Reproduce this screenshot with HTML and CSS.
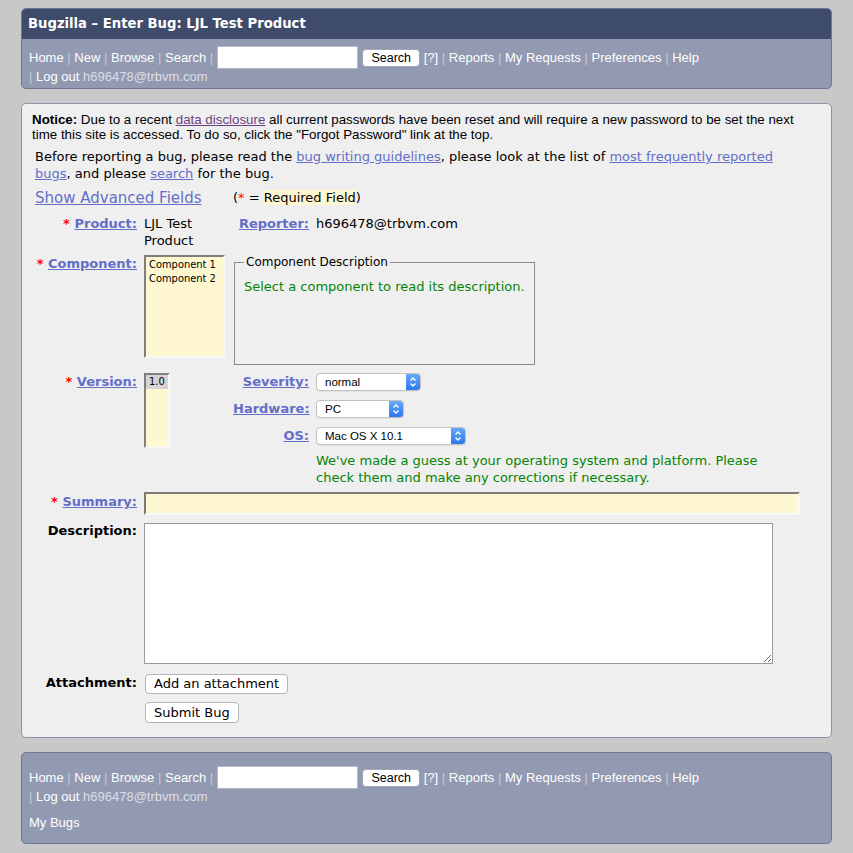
FILE: index.html
```html
<!DOCTYPE html>
<html>
<head>
<meta charset="utf-8">
<title>Bugzilla – Enter Bug: LJL Test Product</title>
<link rel="stylesheet" href="styles.css">
</head>
<body>
<div class="page">
  <div class="header">
    <div class="title">Bugzilla – Enter Bug: LJL Test Product</div>
    <div class="nav">
      <ul class="links">
        <li><a href="#">Home</a></li>
        <li><span class="sep">|</span> <a href="#">New</a></li>
        <li><span class="sep">|</span> <a href="#">Browse</a></li>
        <li><span class="sep">|</span> <a href="#">Search</a></li>
        <li><span class="sep">|</span> <input class="quick" type="text"> <button class="qbtn">Search</button> <a href="#">[?]</a></li>
        <li><span class="sep">|</span> <a href="#">Reports</a></li>
        <li><span class="sep">|</span> <a href="#">My Requests</a></li>
        <li><span class="sep">|</span> <a href="#">Preferences</a></li>
        <li><span class="sep">|</span> <a href="#">Help</a></li>
        <li><span class="sep">|</span> <a href="#">Log out</a> <span class="email">h696478@trbvm.com</span></li>
      </ul>
    </div>
  </div>

  <div class="main">
    <div class="notice"><b>Notice:</b> Due to a recent <a class="visited" href="#">data disclosure</a> all current passwords have been reset and will require a new password to be set the next time this site is accessed. To do so, click the "Forgot Password" link at the top.</div>
    <p class="guide">Before reporting a bug, please read the <a href="#">bug writing guidelines</a>, please look at the list of <a href="#">most frequently reported bugs</a>, and please <a href="#">search</a> for the bug.</p>

    <div class="form">
      <div class="adv r1 c12"><a href="#">Show Advanced Fields</a></div>
      <div class="reqnote r1 c34">(<span class="star">*</span> = <span class="hl">Required Field</span>)</div>

      <div class="lbl r2 c1"><span class="star">*</span> <a href="#">Product:</a></div>
      <div class="val2 r2 c2">LJL Test Product</div>
      <div class="lbl r2 c3"><a href="#">Reporter:</a></div>
      <div class="val r2 c4">h696478@trbvm.com</div>

      <div class="lbl up r3 c1"><span class="star">*</span> <a href="#">Component:</a></div>
      <div class="lb comp up r3 c2">
        <div class="opt">Component 1</div>
        <div class="opt">Component 2</div>
      </div>
      <fieldset class="fs up r3 c34">
        <legend>Component Description</legend>
        <div class="green">Select a component to read its description.</div>
      </fieldset>

      <div class="lbl tall r4 c1"><span class="star">*</span> <a href="#">Version:</a></div>
      <div class="lb ver c2">
        <div class="opt sel">1.0</div>
      </div>
      <div class="lbl tall r4 c3"><a href="#">Severity:</a></div>
      <div class="select w-sev r4 c4"><span class="st">normal</span><span class="sb"><svg width="14" height="16" viewBox="0 0 14 16"><path d="M4.5 6.5 L7 4 L9.5 6.5 M4.5 9.5 L7 12 L9.5 9.5" fill="none" stroke="#fff" stroke-width="1.4"/></svg></span></div>
      <div class="lbl tall r5 c3"><a href="#">Hardware:</a></div>
      <div class="select w-hw r5 c4"><span class="st">PC</span><span class="sb"><svg width="14" height="16" viewBox="0 0 14 16"><path d="M4.5 6.5 L7 4 L9.5 6.5 M4.5 9.5 L7 12 L9.5 9.5" fill="none" stroke="#fff" stroke-width="1.4"/></svg></span></div>
      <div class="lbl tall r6 c3"><a href="#">OS:</a></div>
      <div class="select w-os r6 c4"><span class="st">Mac OS X 10.1</span><span class="sb"><svg width="14" height="16" viewBox="0 0 14 16"><path d="M4.5 6.5 L7 4 L9.5 6.5 M4.5 9.5 L7 12 L9.5 9.5" fill="none" stroke="#fff" stroke-width="1.4"/></svg></span></div>
      <div class="note r7 c4">We've made a guess at your operating system and platform. Please check them and make any corrections if necessary.</div>

      <div class="lbl sumlbl r8 c1"><span class="star">*</span> <a href="#">Summary:</a></div>
      <input class="summary r8 c24" type="text">

      <div class="lbl r9 c1">Description:</div>
      <textarea class="desc r9 c24"></textarea>

      <div class="lbl att r10 c1">Attachment:</div>
      <button class="btn att r10 c24">Add an attachment</button>

      <button class="btn sub r11 c24">Submit Bug</button>
    </div>
  </div>

  <div class="footer">
    <ul class="links">
      <li><a href="#">Home</a></li>
      <li><span class="sep">|</span> <a href="#">New</a></li>
      <li><span class="sep">|</span> <a href="#">Browse</a></li>
      <li><span class="sep">|</span> <a href="#">Search</a></li>
      <li><span class="sep">|</span> <input class="quick" type="text"> <button class="qbtn">Search</button> <a href="#">[?]</a></li>
      <li><span class="sep">|</span> <a href="#">Reports</a></li>
      <li><span class="sep">|</span> <a href="#">My Requests</a></li>
      <li><span class="sep">|</span> <a href="#">Preferences</a></li>
      <li><span class="sep">|</span> <a href="#">Help</a></li>
      <li><span class="sep">|</span> <a href="#">Log out</a> <span class="email">h696478@trbvm.com</span></li>
    </ul>
    <div class="mybugs"><a href="#">My Bugs</a></div>
  </div>
</div>
</body>
</html>
```

FILE: styles.css
```css
html, body {
  margin: 0;
  padding: 0;
}
body {
  background: #c8c8c8;
  font-family: "DejaVu Sans", Verdana, sans-serif;
  font-size: 13px;
  color: #000;
}
.page {
  padding: 8px 21px 0;
}

/* header */
.header {
  background: #929ab2;
  border: 1px solid #6f7892;
  border-radius: 5px;
  overflow: hidden;
}
.title {
  background: #3e4b6b;
  color: #fff;
  font-family: "DejaVu Sans", Verdana, sans-serif;
  font-weight: bold;
  font-size: 13.2px;
  line-height: 30px;
  height: 30px;
  padding: 0 6px;
  white-space: nowrap;
}
.nav {
  padding: 7px 7px 4px;
}
.links {
  margin: 0;
  padding: 0;
  list-style: none;
  font-family: "Liberation Sans", Arial, sans-serif;
  font-size: 13px;
  line-height: 15px;
  color: #fff;
}
.links li {
  display: inline;
  white-space: nowrap;
}
.links a,
.mybugs a {
  color: #fff;
  text-decoration: none;
}
.sep {
  color: #c5c9d5;
}
.email {
  color: #dcdfe7;
}
.quick {
  box-sizing: border-box;
  width: 141px;
  height: 23px;
  margin: 0;
  padding: 0 3px;
  border: 1px solid #b4b8c2;
  background: #fff;
  font-family: "Liberation Sans", Arial, sans-serif;
  font-size: 13px;
  vertical-align: baseline;
}
.qbtn {
  box-sizing: border-box;
  height: 18px;
  margin: 0 0 0 1px;
  padding: 0 8px;
  border: 1px solid #a3a7b2;
  border-radius: 4px;
  background: #fff;
  color: #000;
  font-family: "Liberation Sans", Arial, sans-serif;
  font-size: 12.5px;
  line-height: 14px;
  vertical-align: baseline;
}

/* main */
.main {
  margin-top: 14px;
  background: #efefef;
  border: 1px solid #8c93a6;
  border-radius: 5px;
  padding: 8px 10px 14px;
}
.main a {
  color: #646ec8;
  text-decoration: underline;
}
.main a.visited {
  color: #6e3f80;
}
.notice {
  font-family: "Liberation Sans", Arial, sans-serif;
  font-size: 13.33px;
  line-height: 15px;
  margin-right: 12px;
}
.guide {
  margin: 6px 0 0;
  padding: 0 3px;
  width: 760px;
  line-height: 17px;
}

.form {
  margin-top: 6px;
  display: grid;
  grid-template-columns: 105px 82px 76px 1fr;
  column-gap: 7px;
  row-gap: 7px;
  align-items: start;
}
.r1 { grid-row: 1; }
.r2 { grid-row: 2; }
.r3 { grid-row: 3; }
.r4 { grid-row: 4; }
.r5 { grid-row: 5; }
.r6 { grid-row: 6; }
.r7 { grid-row: 7; }
.r8 { grid-row: 8; }
.r9 { grid-row: 9; }
.r10 { grid-row: 10; }
.r11 { grid-row: 11; }
.c1 { grid-column: 1; }
.c2 { grid-column: 2; }
.c3 { grid-column: 3; }
.c4 { grid-column: 4; }
.c12 { grid-column: 1 / 3; }
.c34 { grid-column: 3 / 5; }
.c24 { grid-column: 2 / 5; }

.adv {
  font-size: 15px;
  line-height: 20px;
  padding-left: 3px;
  white-space: nowrap;
}
.reqnote {
  line-height: 20px;
  white-space: nowrap;
}
.hl {
  background: #fff7cf;
}
.star {
  color: #f00;
}
.lbl {
  text-align: right;
  font-weight: bold;
  line-height: 18px;
  white-space: nowrap;
}
.lbl.tall {
  line-height: 20px;
}
.val {
  line-height: 18px;
  white-space: nowrap;
}
.val2 {
  line-height: 17px;
}
.up {
  margin-top: -1px;
}

.lb {
  box-sizing: border-box;
  border: 2px solid;
  border-color: #7f7f7f #f7f7f7 #f7f7f7 #7f7f7f;
  background: #fff7cf;
  font-family: "DejaVu Sans Condensed", "DejaVu Sans", sans-serif;
  font-size: 11px;
  line-height: 14px;
}
.lb .opt {
  padding: 0 3px;
  white-space: nowrap;
}
.lb .opt.sel {
  background: #d4d4d4;
}
.lb.comp {
  width: 81px;
  height: 103px;
}
.lb.comp .opt:first-child {
  margin-top: 1px;
}
.lb.ver {
  grid-row: 4 / 8;
  width: 26px;
  height: 75px;
  margin-top: 1px;
}

.fs {
  box-sizing: border-box;
  width: 301px;
  height: 110px;
  margin: -1px 0 0 1px;
  padding: 9px 9px 4px;
  border: 1px solid #8b8b8b;
  justify-self: start;
  min-width: 0;
}
.fs legend {
  padding: 0 2px;
  font-size: 12px;
  line-height: 14px;
}
.green {
  color: #058405;
  line-height: 17px;
}

.select {
  box-sizing: border-box;
  display: flex;
  height: 18px;
  border: 1px solid #c2c2c2;
  border-radius: 4px;
  background: #fff;
  overflow: hidden;
  justify-self: start;
  align-self: center;
  box-shadow: 0 1px 1px rgba(0, 0, 0, 0.06);
  font-family: "Liberation Sans", Arial, sans-serif;
  font-size: 11.5px;
}
.select .st {
  flex: 1;
  padding-left: 8px;
  line-height: 16px;
  white-space: nowrap;
}
.select .sb {
  width: 14px;
  display: flex;
  align-items: center;
  justify-content: center;
  background: linear-gradient(#6aa9f9, #2a77f0);
}
.w-sev { width: 105px; }
.w-hw { width: 88px; }
.w-os { width: 150px; }

.note {
  color: #058405;
  width: 460px;
  line-height: 17px;
  margin: -1px 0;
}

.summary {
  box-sizing: border-box;
  width: 656px;
  height: 23px;
  margin: 0;
  border: 2px solid;
  border-color: #7b7b7b #f8f8f8 #f8f8f8 #7b7b7b;
  background: #fff7cf;
  justify-self: start;
}
.sumlbl {
  padding-top: 1px;
}
.desc {
  box-sizing: border-box;
  display: block;
  width: 629px;
  height: 141px;
  margin: 1px 0 0;
  border: 1px solid #9a9a9a;
  background: #fff;
  justify-self: start;
}
.att {
  margin-top: 3px;
}
.btn {
  box-sizing: border-box;
  height: 20px;
  margin-left: 1px;
  padding: 0 8px;
  border: 1px solid #b4b4b4;
  border-radius: 4px;
  background: #fff;
  color: #000;
  font-family: "DejaVu Sans", Verdana, sans-serif;
  font-size: 13px;
  line-height: 16px;
  justify-self: start;
}
.btn.sub {
  margin-top: 1px;
  height: 21px;
}

/* footer */
.footer {
  margin-top: 14px;
  background: #929ab2;
  border: 1px solid #6f7892;
  border-radius: 5px;
  padding: 13px 7px 13px;
}
.mybugs {
  margin-top: 11px;
  font-family: "Liberation Sans", Arial, sans-serif;
  font-size: 13px;
  line-height: 15px;
}
```
